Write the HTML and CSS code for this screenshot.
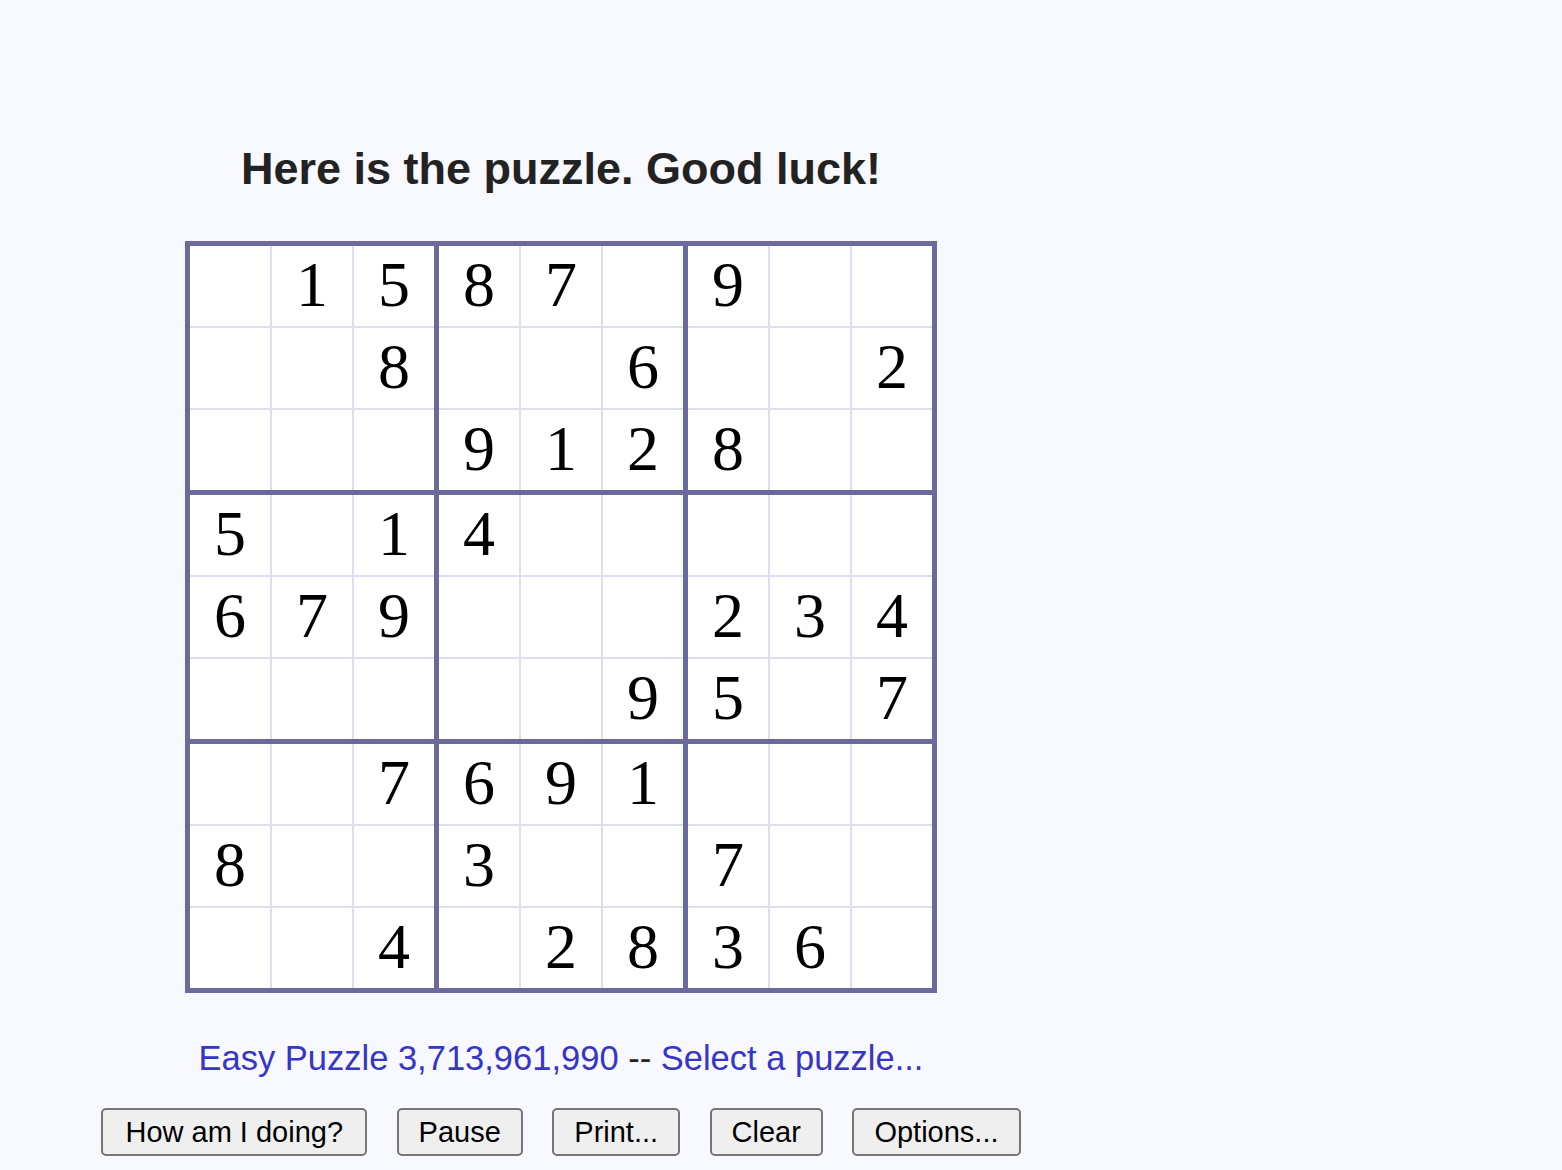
FILE: index.html
```html
<!DOCTYPE html>
<html>
<head>
<meta charset="utf-8">
<title>Sudoku</title>
<link rel="stylesheet" href="styles.css">
</head>
<body>
<div class="page">
  <h1 class="title">Here is the puzzle. Good luck!</h1>
  <div class="board">
    <div class="box">
      <div class="cell"></div><div class="cell">1</div><div class="cell">5</div>
      <div class="cell"></div><div class="cell"></div><div class="cell">8</div>
      <div class="cell"></div><div class="cell"></div><div class="cell"></div>
    </div>
    <div class="box">
      <div class="cell">8</div><div class="cell">7</div><div class="cell"></div>
      <div class="cell"></div><div class="cell"></div><div class="cell">6</div>
      <div class="cell">9</div><div class="cell">1</div><div class="cell">2</div>
    </div>
    <div class="box">
      <div class="cell">9</div><div class="cell"></div><div class="cell"></div>
      <div class="cell"></div><div class="cell"></div><div class="cell">2</div>
      <div class="cell">8</div><div class="cell"></div><div class="cell"></div>
    </div>
    <div class="box">
      <div class="cell">5</div><div class="cell"></div><div class="cell">1</div>
      <div class="cell">6</div><div class="cell">7</div><div class="cell">9</div>
      <div class="cell"></div><div class="cell"></div><div class="cell"></div>
    </div>
    <div class="box">
      <div class="cell">4</div><div class="cell"></div><div class="cell"></div>
      <div class="cell"></div><div class="cell"></div><div class="cell"></div>
      <div class="cell"></div><div class="cell"></div><div class="cell">9</div>
    </div>
    <div class="box">
      <div class="cell"></div><div class="cell"></div><div class="cell"></div>
      <div class="cell">2</div><div class="cell">3</div><div class="cell">4</div>
      <div class="cell">5</div><div class="cell"></div><div class="cell">7</div>
    </div>
    <div class="box">
      <div class="cell"></div><div class="cell"></div><div class="cell">7</div>
      <div class="cell">8</div><div class="cell"></div><div class="cell"></div>
      <div class="cell"></div><div class="cell"></div><div class="cell">4</div>
    </div>
    <div class="box">
      <div class="cell">6</div><div class="cell">9</div><div class="cell">1</div>
      <div class="cell">3</div><div class="cell"></div><div class="cell"></div>
      <div class="cell"></div><div class="cell">2</div><div class="cell">8</div>
    </div>
    <div class="box">
      <div class="cell"></div><div class="cell"></div><div class="cell"></div>
      <div class="cell">7</div><div class="cell"></div><div class="cell"></div>
      <div class="cell">3</div><div class="cell">6</div><div class="cell"></div>
    </div>
  </div>
  <p class="info"><span class="link">Easy Puzzle 3,713,961,990</span> -- <span class="link">Select a puzzle...</span></p>
  <div class="buttons">
    <button class="btn btn-wide">How am I doing?</button>
    <button class="btn">Pause</button>
    <button class="btn">Print...</button>
    <button class="btn">Clear</button>
    <button class="btn">Options...</button>
  </div>
</div>
</body>
</html>
```
FILE: styles.css
```css
html, body {
  margin: 0;
  padding: 0;
  background: #f8f8ff;
}
body {
  font-family: "Liberation Sans", Arial, sans-serif;
  color: #222;
}
.page {
  width: 1122px;
  display: flex;
  flex-direction: column;
  align-items: center;
  padding-top: 144px;
}
.title {
  margin: 0;
  font-size: 45px;
  line-height: 50px;
  font-weight: bold;
  color: #222;
}
.board {
  margin-top: 47px;
  display: grid;
  grid-template-columns: repeat(3, 244px);
  grid-template-rows: repeat(3, 244px);
  gap: 5px;
  padding: 5px;
  background: #6a6a9c;
}
.box {
  display: grid;
  grid-template-columns: repeat(3, 80px);
  grid-template-rows: repeat(3, 80px);
  gap: 2px;
  background: #dedef0;
}
.cell {
  background: #fff;
  font-family: "Liberation Serif", "Times New Roman", serif;
  font-size: 64px;
  line-height: 78px;
  text-align: center;
  color: #000;
}
.info {
  margin: 45px 0 0;
  font-size: 34.5px;
  line-height: 40px;
  color: #222;
}
.link {
  color: #3535c8;
}
.buttons {
  margin-top: 30px;
  display: flex;
  gap: 29.5px;
}
.btn {
  font-family: "Liberation Sans", Arial, sans-serif;
  font-size: 29px;
  height: 48px;
  padding: 0 20px;
  background: #efefef;
  border: 2px solid #767676;
  border-radius: 5px;
  color: #000;
}
.btn-wide {
  padding: 0 22px;
}
```
